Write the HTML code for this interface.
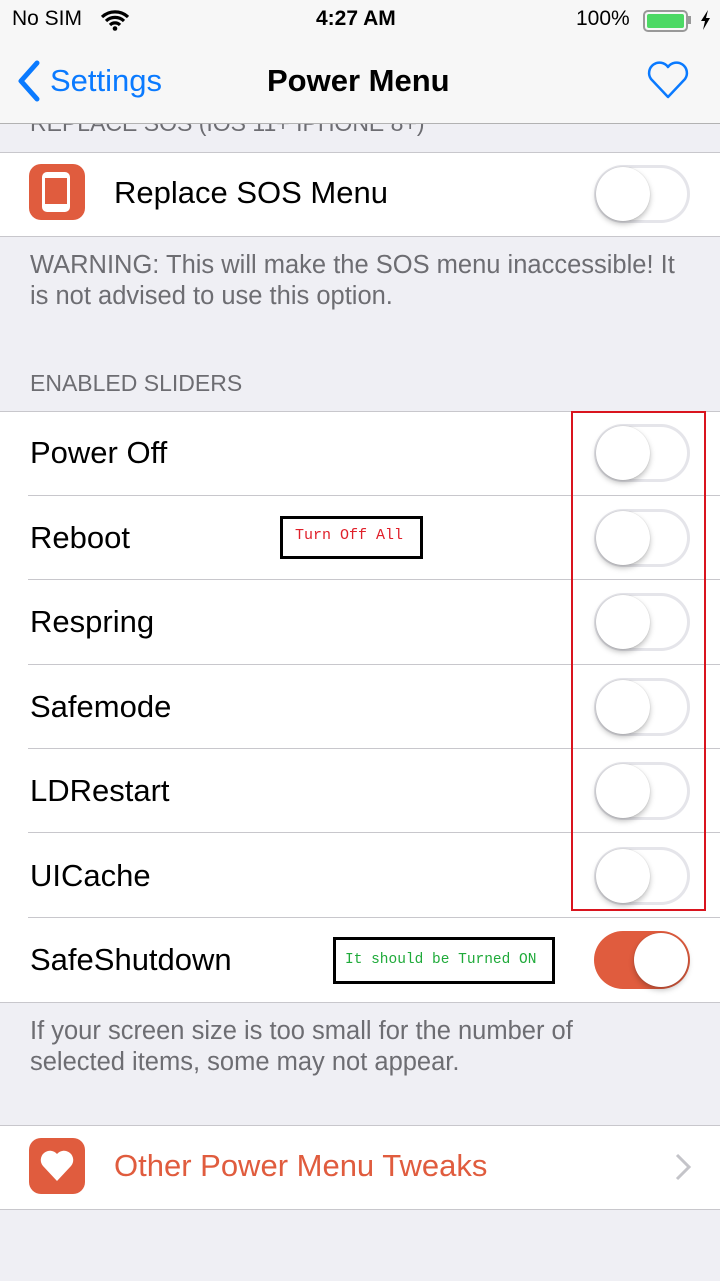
<!DOCTYPE html><html><head><style>
body{margin:0;width:720px;height:1281px;background:#efeff4;font-family:"Liberation Sans",sans-serif;position:relative;overflow:hidden}
.a{position:absolute}
.row{position:absolute;left:0;width:720px;background:#fff}
.lbl{position:absolute;left:30px;font-size:31px;color:#000}
.sep{position:absolute;left:28px;right:0;height:1px;background:#c8c7cc}
.tg{position:absolute;left:594px;width:96px;height:58px;border-radius:29px;background:#fff;box-shadow:inset 0 0 0 3px #e5e5ea}
.tg::after{content:"";position:absolute;left:2px;top:2px;width:54px;height:54px;border-radius:50%;background:#fff;box-shadow:0 3px 6px rgba(0,0,0,.25),0 0 1px rgba(0,0,0,.2)}
.tg.on{background:#e05c3e;box-shadow:none}
.tg.on::after{left:40px}
.note{position:absolute;left:30px;font-size:25.5px;color:#6d6d72;line-height:31px}
</style></head><body>
<div class="a" style="left:30px;top:110px;font-size:23px;color:#6d6d72">REPLACE SOS (IOS 11+ IPHONE 8+)</div>
<div class="a" style="left:0;top:0;width:720px;height:123px;background:#f7f7f7;border-bottom:1px solid #b2b2b2"></div>
<div class="a" style="left:12px;top:7px;font-size:21px">No SIM</div>
<svg class="a" style="left:100px;top:9px" width="30" height="22" viewBox="0 0 30 22"><path d="M2 8a19 19 0 0 1 26 0M6 12a13 13 0 0 1 18 0M10 16a7 7 0 0 1 10 0" stroke="#000" stroke-width="3.2" fill="none"/><circle cx="15" cy="19.5" r="2.3"/></svg>
<div class="a" style="left:316px;top:7px;font-size:21px;font-weight:bold">4:27 AM</div>
<div class="a" style="left:576px;top:7px;font-size:21px">100%</div>
<div class="a" style="left:643px;top:10px;width:41px;height:18px;border:2px solid #999;border-radius:5px"><div style="margin:2px;height:14px;background:#4cd964;border-radius:2px"></div></div>
<div class="a" style="left:688px;top:16px;width:3px;height:8px;background:#999"></div>
<svg class="a" style="left:700px;top:10px" width="12" height="20"><path d="M8 0L1 11h4l-2 9 7-12H6z" fill="#000"/></svg>
<svg class="a" style="left:16px;top:60px" width="26" height="42"><path d="M21 3L5 21l16 18" stroke="#0a7aff" stroke-width="5" fill="none" stroke-linecap="round" stroke-linejoin="round"/></svg>
<div class="a" style="left:50px;top:63px;font-size:31px;color:#0a7aff">Settings</div>
<div class="a" style="left:267px;top:63px;font-size:31px;font-weight:bold">Power Menu</div>
<svg class="a" style="left:646px;top:60px" width="44" height="40" viewBox="0 0 44 40"><path d="M22 37L5 19A10 10 0 0 1 22 7A10 10 0 0 1 39 19Z" stroke="#0a7aff" stroke-width="2.5" fill="none" stroke-linejoin="round"/></svg>
<div class="row" style="top:152px;height:83px;border-top:1px solid #c8c7cc;border-bottom:1px solid #c8c7cc"></div>
<div class="a" style="left:29px;top:164px;width:56px;height:56px;border-radius:12px;background:#e05c3e"></div>
<div class="a" style="left:42px;top:172px;width:28px;height:40px;border-radius:5px;background:#fff"><div style="margin:6px 3px;height:26px;background:#e05c3e"></div></div>
<div class="lbl" style="left:114px;top:175px">Replace SOS Menu</div>
<div class="tg" style="top:165px"></div>
<div class="note" style="top:250px">WARNING: This will make the SOS menu inaccessible! It<br>is not advised to use this option.</div>
<div class="note" style="top:368px;font-size:23px">ENABLED SLIDERS</div>
<div class="row" style="top:411px;height:590px;border-top:1px solid #c8c7cc;border-bottom:1px solid #c8c7cc"></div>
<div class="lbl" style="top:435px">Power Off</div><div class="tg" style="top:424px"></div><div class="sep" style="top:495px"></div>
<div class="lbl" style="top:520px">Reboot</div><div class="tg" style="top:509px"></div><div class="sep" style="top:579px"></div>
<div class="lbl" style="top:604px">Respring</div><div class="tg" style="top:593px"></div><div class="sep" style="top:664px"></div>
<div class="lbl" style="top:689px">Safemode</div><div class="tg" style="top:678px"></div><div class="sep" style="top:748px"></div>
<div class="lbl" style="top:773px">LDRestart</div><div class="tg" style="top:762px"></div><div class="sep" style="top:832px"></div>
<div class="lbl" style="top:858px">UICache</div><div class="tg" style="top:847px"></div><div class="sep" style="top:917px"></div>
<div class="lbl" style="top:942px">SafeShutdown</div><div class="tg on" style="top:931px"></div>
<div class="a" style="left:571px;top:411px;width:131px;height:496px;border:2px solid #d9141e"></div>
<div class="a" style="left:280px;top:516px;width:137px;height:37px;border:3px solid #000;background:#fff;font-family:'Liberation Mono',monospace;font-size:15px;color:#e0202a;line-height:34px;text-indent:12px">Turn Off All</div>
<div class="a" style="left:333px;top:937px;width:216px;height:41px;border:3px solid #000;background:#fff;font-family:'Liberation Mono',monospace;font-size:14.5px;color:#1faa3a;line-height:40px;text-indent:9px">It should be Turned ON</div>
<div class="note" style="top:1016px">If your screen size is too small for the number of<br>selected items, some may not appear.</div>
<div class="row" style="top:1125px;height:83px;border-top:1px solid #c8c7cc;border-bottom:1px solid #c8c7cc"></div>
<div class="a" style="left:29px;top:1138px;width:56px;height:56px;border-radius:12px;background:#e05c3e"></div>
<svg class="a" style="left:38px;top:1148px" width="38" height="36" viewBox="0 0 38 36"><path d="M19 33L5 18A8 8 0 0 1 19 6A8 8 0 0 1 33 18Z" fill="#fff"/></svg>
<div class="lbl" style="left:114px;top:1148px;color:#e05c3e">Other Power Menu Tweaks</div>
<svg class="a" style="left:674px;top:1152px" width="18" height="30"><path d="M3 3l12 12L3 27" stroke="#c4c4c9" stroke-width="3" fill="none"/></svg>
</body></html>
